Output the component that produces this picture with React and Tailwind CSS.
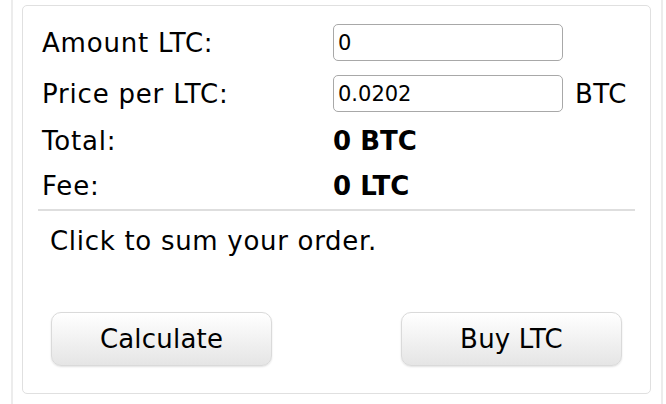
export default function App() {
  const rows = [
    { label: 'Amount LTC:', input: '0' },
    { label: 'Price per LTC:', input: '0.0202', unit: 'BTC' },
  ]

  return (
    <div className="w-[666px] h-[404px] bg-white overflow-hidden font-['DejaVu_Sans',Verdana,sans-serif] text-black">
      <div className="ml-[11px] w-[652px] h-full border-x-2 border-[#ececec] pt-[5px] px-[9px]">
        <div className="w-[629px] h-[389px] border border-[#e0e0e0] rounded-[5px] pt-[18px]">
          {rows.map((r, i) => (
            <div
              key={r.label}
              className={`flex items-center h-[37px] ${i === 1 ? 'mt-[14px]' : ''}`}
            >
              <div className="w-[310px] pl-[19px] text-[26px] leading-none tracking-[0.8px]">{r.label}</div>
              <input
                readOnly
                value={r.input}
                className="w-[230px] h-[37px] border-[1.5px] border-[#a8a8a8] rounded-[5px] px-[4px] text-[21px] font-['DejaVu_Sans',sans-serif] text-black outline-none"
              />
              {r.unit && <span className="ml-[12px] text-[26px] leading-none tracking-[0.5px]">{r.unit}</span>}
            </div>
          ))}

          <div className="flex items-center h-[36px] mt-[11px]">
            <div className="w-[310px] pl-[19px] text-[26px] leading-none tracking-[0.8px]">Total:</div>
            <div className="text-[26px] leading-none font-bold">0 BTC</div>
          </div>
          <div className="flex items-center h-[36px] mt-[9px]">
            <div className="w-[310px] pl-[19px] text-[26px] leading-none tracking-[0.8px]">Fee:</div>
            <div className="text-[26px] leading-none font-bold">0 LTC</div>
          </div>

          <div className="mx-[15px] mt-[5px] h-[2px] bg-[#dedede]" />

          <div className="h-[36px] mt-[12px] pl-[27px] flex items-center text-[26px] leading-none tracking-[0.7px]">
            Click to sum your order.
          </div>

          <div className="flex justify-between px-[28px] mt-[53px]">
            {['Calculate', 'Buy LTC'].map((b) => (
              <button
                key={b}
                className="w-[221px] h-[54px] rounded-[10px] border border-[#dadada] bg-gradient-to-b from-white to-[#e5e5e5] shadow-[0_1px_2px_rgba(0,0,0,0.12)] text-[26px] tracking-[0.2px] text-black"
              >
                {b}
              </button>
            ))}
          </div>
        </div>
      </div>
    </div>
  )
}
